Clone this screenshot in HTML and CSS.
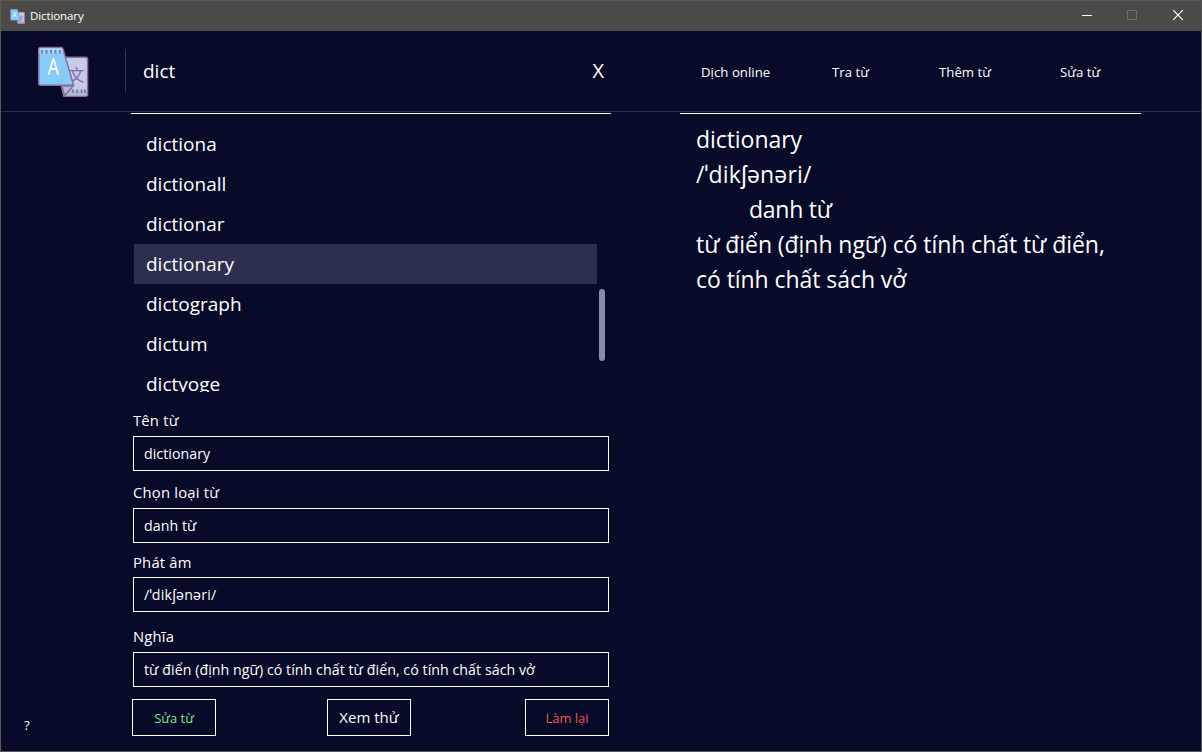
FILE: index.html
```html
<!DOCTYPE html>
<html lang="vi">
<head>
<meta charset="utf-8">
<title>Dictionary</title>
<link rel="stylesheet" href="styles.css">
</head>
<body>
<div class="window">
  <svg width="0" height="0" class="defs">
    <symbol id="logo" viewBox="0 0 52 52">
      <path d="M24 39 L27 50.2 H48.5 Q50.6 50.2 50.6 48.2 V13.2 Q50.6 11.2 48.5 11.2 H27 Z" fill="#c5cce8" stroke="#8d6ba3" stroke-width="1.500"/>
      <path d="M31 46.500 L36 40.500 L36 44.500 H49.900 V49.400 H28 Z" fill="#b0b9d6"/>
      <path d="M35.800 43.500v3.600 M40.200 43.500v3.600 M44.600 43.500v3.600 M48 43.500v3.600" stroke="#8d6ba3" stroke-width="1.600"/>
      <text class="logo-cjk" x="31.500" y="34.800">文</text>
      <path d="M25 40 H36.200 L27.400 50 Z" fill="#b0b9d6" stroke="#8d6ba3" stroke-width="1.500" stroke-linejoin="round"/>
      <path d="M3.500 1.500 H24.200 Q25.600 1.500 26 3 L36.600 39.200 H3.500 Q1.700 39.200 1.700 37.500 V3.300 Q1.700 1.500 3.500 1.500 Z" fill="#85ccf8" stroke="#8d6ba3" stroke-width="1.500"/>
      <path d="M2.500 2.300 H25 L26 7 H2.500 Z" fill="#a4dafa"/>
      <path d="M5 4v3.400 M9.500 4v3.400 M14 4v3.400 M18.500 4v3.400 M23 4v3.400" stroke="#8d6ba3" stroke-width="1.800"/>
      <text class="logo-a" x="10.500" y="29.400" textLength="11.400" lengthAdjust="spacingAndGlyphs">A</text>
    </symbol>
  </svg>
  <div class="titlebar">
    <svg class="title-icon"><use href="#logo"/></svg>
    <span class="title">Dictionary</span>
    <svg class="controls" width="138" height="30" viewBox="0 0 138 30">
      <path d="M19 14.500h10" stroke="#fff"/>
      <rect x="64.500" y="9.500" width="9" height="9" fill="none" stroke="#706e6c"/>
      <path d="M110.200 9.200l9.600 9.600 M119.800 9.200l-9.600 9.600" stroke="#fff" stroke-width="1.200"/>
    </svg>
  </div>
  <div class="header">
    <svg class="logo"><use href="#logo"/></svg>
    <div class="search"><span class="query">dict</span><span class="clear">X</span></div>
    <nav class="nav">
      <span class="nav-item">Dịch online</span>
      <span class="nav-item">Tra từ</span>
      <span class="nav-item">Thêm từ</span>
      <span class="nav-item">Sửa từ</span>
    </nav>
  </div>
  <div class="main">
    <div class="side"><span class="help">?</span></div>
    <div class="left">
      <div class="list">
        <div class="items">
          <div class="item">dictiona</div>
          <div class="item">dictionall</div>
          <div class="item">dictionar</div>
          <div class="item selected">dictionary</div>
          <div class="item">dictograph</div>
          <div class="item">dictum</div>
          <div class="item">dictyoge</div>
        </div>
        <div class="thumb"></div>
      </div>
      <div class="field name"><span class="label">Tên từ</span><div class="input">dictionary</div></div>
      <div class="field kind"><span class="label">Chọn loại từ</span><div class="input">danh từ</div></div>
      <div class="field sound"><span class="label">Phát âm</span><div class="input ipa">/ˈdikʃənəri/</div></div>
      <div class="field meaning"><span class="label">Nghĩa</span><div class="input">từ điển (định ngữ) có tính chất từ điển, có tính chất sách vở</div></div>
      <div class="buttons">
        <div class="button save">Sửa từ</div>
        <div class="button preview">Xem thử</div>
        <div class="button reset">Làm lại</div>
      </div>
    </div>
    <div class="detail">
      <div class="line">dictionary</div>
      <div class="line phonetic">/ˈdikʃənəri/</div>
      <div class="line indent">danh từ</div>
      <div class="line">từ điển (định ngữ) có tính chất từ điển,</div>
      <div class="line">có tính chất sách vở</div>
    </div>
  </div>
</div>
</body>
</html>
```
FILE: styles.css
```css
* { box-sizing: border-box; }
body { margin: 0; font-family: "Open Sans", "Noto Sans", sans-serif; color: #fff; }
.defs { position: absolute; }
.window { width: 1202px; height: 752px; border: 1px solid #5b5957; background: #070a29; display: flex; flex-direction: column; overflow: hidden; white-space: nowrap; }
.titlebar { height: 30px; flex: none; background: #4c4a48; display: flex; align-items: center; }
.title-icon { width: 15px; height: 15px; margin-left: 9px; }
.title { font-size: 11.5px; margin-left: 5px; padding-bottom: 2px; letter-spacing: -0.1px; }
.controls { margin-left: auto; }
.logo-cjk { font: 400 16px "Noto Sans CJK SC", sans-serif; fill: #8d6ba3; }
.logo-a { font: 23px "Open Sans", sans-serif; fill: #fff; }
.header { height: 81px; flex: none; border-bottom: 1px solid #2c2d4c; display: flex; align-items: center; }
.logo { width: 52px; height: 52px; margin: 2px 0 0 36px; }
.search { width: 486px; height: 44px; margin-left: 36px; border-left: 1px solid #343655; display: flex; align-items: center; justify-content: space-between; padding: 0 7px 0 17px; font-size: 19px; }
.clear { font-size: 20px; padding-bottom: 2px; }
.nav { flex: 1; display: flex; font-size: 13.2px; padding: 1px 0 0 90px; }
.nav-item { letter-spacing: 0.03px; }
.nav-item:nth-child(1) { width: 131px; }
.nav-item:nth-child(2) { width: 107px; }
.nav-item:nth-child(3) { width: 121px; }
.main { flex: 1; display: flex; padding-top: 1px; }
.side { width: 130px; display: flex; flex-direction: column; justify-content: flex-end; padding: 0 0 17px 23px; font-size: 13px; }
.left { width: 480px; border-top: 1px solid #fff; }
.list { height: 278px; padding: 10px 6px 0 3px; display: flex; overflow: hidden; }
.items { width: 463px; }
.item { height: 40px; line-height: 40px; padding-left: 12px; font-size: 19px; }
.selected { background: #2c2f4f; }
.thumb { width: 6px; height: 72px; border-radius: 3px; background: #888bae; margin: 165px 0 0 2px; }
.field { margin-left: 2px; width: 476px; display: flex; flex-direction: column; gap: 5px; }
.label { height: 20px; line-height: 18px; font-size: 14.8px; letter-spacing: 0.2px; }
.input { height: 35px; border: 1px solid #fff; padding-left: 10px; line-height: 33px; font-size: 14.2px; letter-spacing: 0.05px; }
.ipa { letter-spacing: 0.2px; }
.name { margin-top: 19px; }
.kind { margin-top: 12px; }
.sound { margin-top: 10px; gap: 4px; }
.meaning { margin-top: 15px; }
.buttons { display: flex; justify-content: space-between; margin: 12px 2px 0 1px; }
.button { width: 84px; height: 37px; border: 1px solid #fff; text-align: center; line-height: 36px; font-size: 13px; }
.save { color: #7ee787; }
.preview { font-size: 15px; line-height: 34px; margin-right: 3px; }
.reset { color: #f4573f; }
.detail { width: 461px; margin-left: 69px; border-top: 1px solid #fff; padding: 8px 0 0 16px; font-size: 23px; }
.line { height: 35px; line-height: 35px; letter-spacing: -0.06px; }
.phonetic { letter-spacing: 0.16px; }
.indent { padding-left: 53px; letter-spacing: -0.25px; }
```
